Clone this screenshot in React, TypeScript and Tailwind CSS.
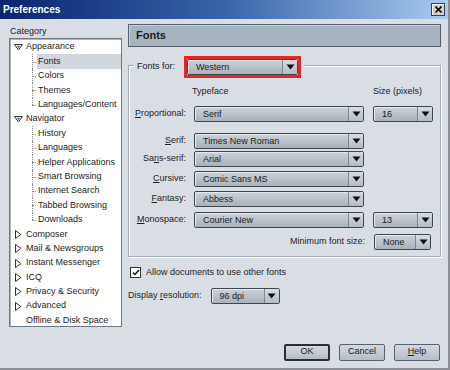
import React from "react";

const font = "font-['Liberation_Sans',Arial,sans-serif]";

const Caret = () => (
  <svg width="9" height="6" viewBox="0 0 9 6">
    <path d="M0.5 0.5 L8.5 0.5 L4.5 5.5 Z" fill="#111" />
  </svg>
);

const Select: React.FC<{ value: string; className?: string }> = ({ value, className }) => (
  <div
    className={`flex h-[16px] items-stretch rounded-[2px] border border-[#3e464e] bg-gradient-to-b from-[#ccd2d9] to-[#a9b2bc] shadow-[inset_1px_1px_0_#e6eaef] ${className ?? ""}`}
  >
    <span className="flex-1 truncate pl-[8px] text-[9px] leading-[14px] text-[#202020]">{value}</span>
    <span className="flex w-[15px] items-center justify-center border-l border-[#7c858f] bg-gradient-to-b from-[#d8dde3] to-[#b3bbc4]">
      <Caret />
    </span>
  </div>
);

const Down = () => (
  <svg width="9" height="7" viewBox="0 0 9 7" className="mr-[3px]">
    <path d="M0.5 0.5 L8.5 0.5 L4.5 6 Z" fill="#fff" stroke="#333" strokeWidth="1" />
    <path d="M2.5 1.8 L6.5 1.8 L4.5 4.5 Z" fill="#777" />
  </svg>
);

const Right = () => (
  <svg width="7" height="9" viewBox="0 0 7 9" className="mr-[4px] ml-[1px]">
    <path d="M0.5 0.5 L6 4.5 L0.5 8.5 Z" fill="#fff" stroke="#333" strokeWidth="1" />
  </svg>
);

type Node = { label: string; kind: "open" | "closed" | "leaf" | "child"; selected?: boolean; last?: boolean };

const tree: Node[] = [
  { label: "Appearance", kind: "open" },
  { label: "Fonts", kind: "child", selected: true },
  { label: "Colors", kind: "child" },
  { label: "Themes", kind: "child" },
  { label: "Languages/Content", kind: "child", last: true },
  { label: "Navigator", kind: "open" },
  { label: "History", kind: "child" },
  { label: "Languages", kind: "child" },
  { label: "Helper Applications", kind: "child" },
  { label: "Smart Browsing", kind: "child" },
  { label: "Internet Search", kind: "child" },
  { label: "Tabbed Browsing", kind: "child" },
  { label: "Downloads", kind: "child", last: true },
  { label: "Composer", kind: "closed" },
  { label: "Mail & Newsgroups", kind: "closed" },
  { label: "Instant Messenger", kind: "closed" },
  { label: "ICQ", kind: "closed" },
  { label: "Privacy & Security", kind: "closed" },
  { label: "Advanced", kind: "closed" },
  { label: "Offline & Disk Space", kind: "leaf" },
];

const TreeRow: React.FC<{ node: Node }> = ({ node }) => {
  if (node.kind === "child") {
    return (
      <div className="flex h-[14.4px] items-center">
        <div className="relative ml-[22px] h-full w-[5px]">
          <div
            className={`absolute left-0 top-0 border-l border-dotted border-[#888] ${node.last ? "h-1/2" : "h-full"}`}
          />
          <div className="absolute left-0 top-1/2 w-[4px] border-t border-dotted border-[#888]" />
        </div>
        <span
          className={`flex h-full flex-1 items-center pl-[1px] ${node.selected ? "bg-[#d2d6dd]" : ""}`}
        >
          {node.label}
        </span>
      </div>
    );
  }
  return (
    <div className="flex h-[14.4px] items-center pl-[4px]">
      {node.kind === "open" && <Down />}
      {node.kind === "closed" && <Right />}
      {node.kind === "leaf" && <span className="w-[12px]" />}
      <span>{node.label}</span>
    </div>
  );
};

const rows: { label: React.ReactNode; value: string; size?: string; mt: string }[] = [
  { label: <><u>P</u>roportional:</>, value: "Serif", size: "16", mt: "mt-[7px]" },
  { label: <><u>S</u>erif:</>, value: "Times New Roman", mt: "mt-[11px]" },
  { label: <>Sa<u>n</u>s-serif:</>, value: "Arial", mt: "mt-[2px]" },
  { label: <><u>C</u>ursive:</>, value: "Comic Sans MS", mt: "mt-[4px]" },
  { label: <><u>F</u>antasy:</>, value: "Abbess", mt: "mt-[4px]" },
  { label: <><u>M</u>onospace:</>, value: "Courier New", size: "13", mt: "mt-[5px]" },
];

const Button: React.FC<{ label: React.ReactNode; def?: boolean }> = ({ label, def }) => (
  <button
    className={`flex h-[17px] w-[46px] items-center justify-center rounded-[2px] bg-gradient-to-b from-[#d4d9df] to-[#b5bdc6] text-[9px] text-[#202020] ${
      def ? "border-2 border-[#2a2f35]" : "border border-[#59616a]"
    }`}
  >
    {label}
  </button>
);

export default function App() {
  return (
    <div className={`${font} h-[370px] w-[450px] overflow-hidden bg-[#d9dee5] text-[9px] text-[#1c1c1c]`}>
      <div className="flex h-full flex-col border-r-2 border-b-2 border-[#8a8f96]">
        {/* title bar */}
        <div className="flex h-[19px] items-center justify-between bg-gradient-to-r from-[#0b2470] via-[#3a64a8] to-[#a9cbf0] pl-[3px] pr-[3px]">
          <span className="text-[10px] font-bold text-white">Preferences</span>
          <span className="flex h-[13px] w-[14px] items-center justify-center border border-[#404040] bg-[#d4d0c8] shadow-[inset_1px_1px_0_#fff]">
            <svg width="7" height="7" viewBox="0 0 7 7">
              <path d="M0.5 0.5 L6.5 6.5 M6.5 0.5 L0.5 6.5" stroke="#000" strokeWidth="1.6" />
            </svg>
          </span>
        </div>

        <div className="flex flex-1 pl-[9px] pr-[7px] pt-[5px]">
          {/* category column */}
          <div className="flex w-[113px] flex-col">
            <span className="ml-[1px] h-[14px] leading-[14px]">Category</span>
            <div className="h-[289px] border border-[#6f7780] bg-white pt-[1px] shadow-[inset_1px_1px_0_#b0b6bd]">
              {tree.map((n) => (
                <TreeRow key={n.label} node={n} />
              ))}
            </div>
          </div>

          {/* right panel */}
          <div className="ml-[6px] flex w-[313px] flex-col">
            <div className="flex h-[23px] items-center border border-[#56606a] bg-[#a7b3bf] pl-[7px] shadow-[inset_1px_1px_0_#c6ced6]">
              <span className="text-[11px] font-bold text-[#1a1a1a]">Fonts</span>
            </div>

            {/* group box */}
            <div className="relative mt-[18px] h-[192px] border border-[#a3abb4] shadow-[inset_1px_1px_0_#fff,1px_1px_0_#fff]">
              <div className="absolute left-[5px] top-[-10px] flex items-center bg-[#d9dee5] pl-[3px] pr-[3px]">
                <span className="mr-[9px]">Fonts for:</span>
                <div className="border-[3px] border-[#e02a2a] p-0">
                  <Select value="Western" className="w-[111px]" />
                </div>
              </div>

              <div className="flex pl-[63px] pt-[19px]">
                <span className="w-[181px]">Typeface</span>
                <span>Size (pixels)</span>
              </div>

              {rows.map((r, i) => (
                <div key={i} className={`flex items-center ${r.mt}`}>
                  <span className="w-[57px] text-right">{r.label}</span>
                  <Select value={r.value} className="ml-[8px] w-[170px]" />
                  {r.size && <Select value={r.size} className="ml-[9px] w-[60px]" />}
                </div>
              ))}

              <div className="mt-[6px] flex items-center justify-end pr-[9px]">
                <span className="mr-[9px]">Minimum font size:</span>
                <Select value="None" className="w-[57px]" />
              </div>
            </div>

            <div className="mt-[9px] flex items-center pl-[2px]">
              <span className="flex h-[11px] w-[11px] items-center justify-center border border-[#333] bg-white">
                <svg width="8" height="7" viewBox="0 0 8 7">
                  <path d="M1 3.5 L3 5.5 L7 1" stroke="#111" strokeWidth="1.5" fill="none" />
                </svg>
              </span>
              <span className="ml-[5px]">Allow documents to use other fonts</span>
            </div>

            <div className="mt-[8px] flex items-center">
              <span>Display <u>r</u>esolution:</span>
              <Select value="96 dpi" className="ml-[9px] w-[69px]" />
            </div>

            <div className="mt-[40px] flex justify-end gap-[9px] pr-[1px]">
              <Button label="OK" def />
              <Button label="Cancel" />
              <Button label={<><u>H</u>elp</>} />
            </div>
          </div>
        </div>
      </div>
    </div>
  );
}
